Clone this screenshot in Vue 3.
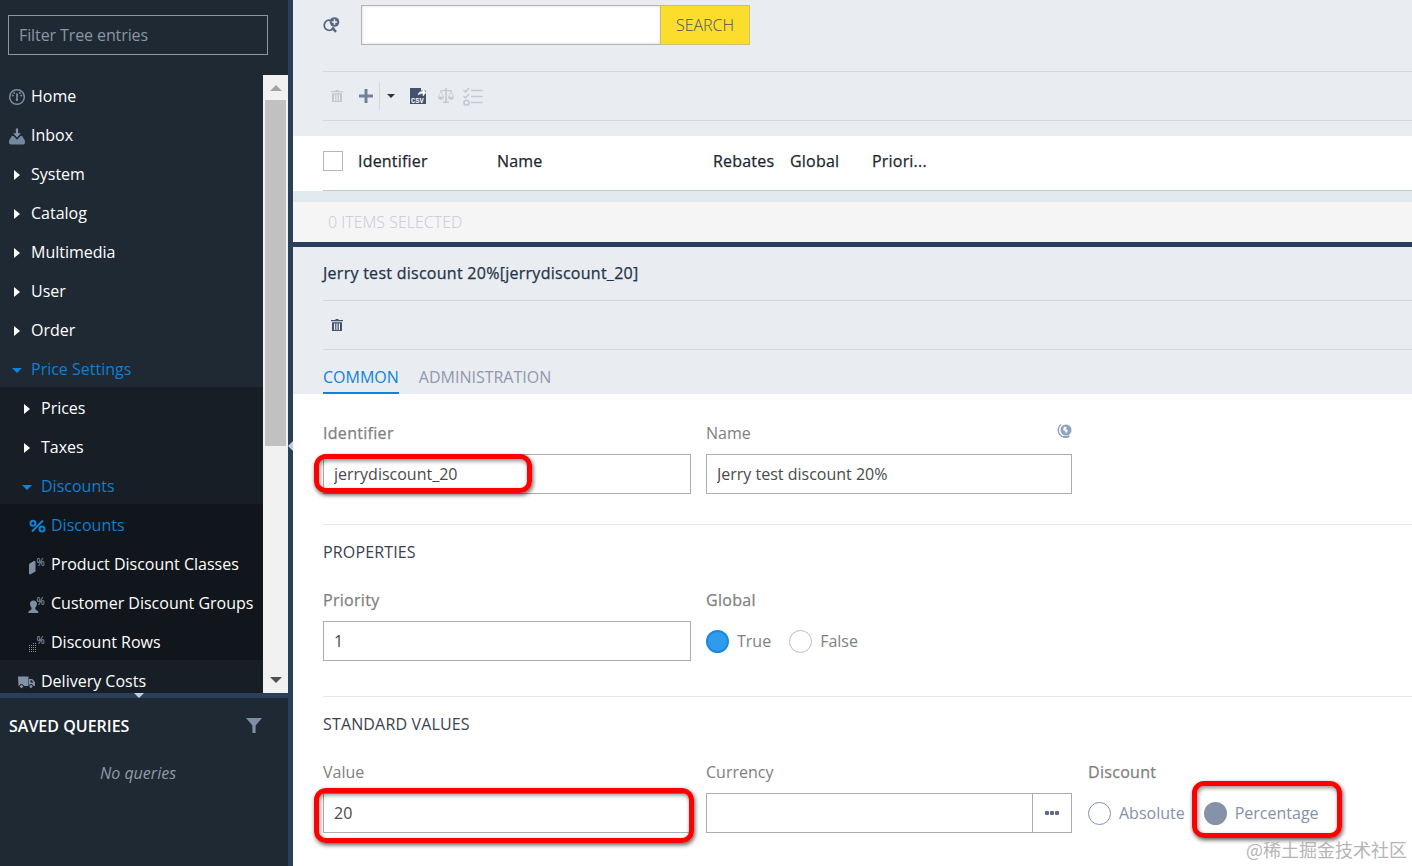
<script setup>
const tree = [
  { label: 'Home', icon: 'home', level: 0 },
  { label: 'Inbox', icon: 'inbox', level: 0 },
  { label: 'System', arrow: 'right', level: 0 },
  { label: 'Catalog', arrow: 'right', level: 0 },
  { label: 'Multimedia', arrow: 'right', level: 0 },
  { label: 'User', arrow: 'right', level: 0 },
  { label: 'Order', arrow: 'right', level: 0 },
  { label: 'Price Settings', arrow: 'down', level: 0, active: true },
  { label: 'Prices', arrow: 'right', level: 1 },
  { label: 'Taxes', arrow: 'right', level: 1 },
  { label: 'Discounts', arrow: 'down', level: 1, active: true },
  { label: 'Discounts', icon: 'percent', level: 2, active: true },
  { label: 'Product Discount Classes', icon: 'product', level: 2 },
  { label: 'Customer Discount Groups', icon: 'customer', level: 2 },
  { label: 'Discount Rows', icon: 'rows', level: 2 },
  { label: 'Delivery Costs', icon: 'truck', level: 1 }
]
const columns = ['Identifier', 'Name', 'Rebates', 'Global', 'Priori...']
</script>

<template>
  <div class="page">
    <aside class="sidebar">
      <div class="sidebar-main">
        <div class="filter-wrap">
          <input class="filter" placeholder="Filter Tree entries" />
        </div>
        <div class="tree-area">
          <nav class="tree">
            <div
              v-for="(item, i) in tree"
              :key="i"
              class="row"
              :class="['lvl' + item.level, { active: item.active }]"
            >
              <span class="slot">
                <span v-if="item.arrow === 'right'" class="arrow-right"></span>
                <span v-else-if="item.arrow === 'down'" class="arrow-down"></span>
                <svg v-else-if="item.icon === 'home'" width="18" height="18" viewBox="0 0 18 18">
                  <circle cx="9" cy="9" r="7.300" fill="none" stroke="#7f8fa3" stroke-width="1.500" />
                  <path d="M8 5.500h2l-.3 5a1.300 1.300 0 1 1-1.400 0z" fill="#7f8fa3" />
                  <circle cx="4.800" cy="7.500" r="1" fill="#7f8fa3" /><circle cx="13.200" cy="7.500" r="1" fill="#7f8fa3" />
                  <circle cx="6.200" cy="5" r=".9" fill="#7f8fa3" /><circle cx="11.800" cy="5" r=".9" fill="#7f8fa3" />
                </svg>
                <svg v-else-if="item.icon === 'inbox'" class="shift1" width="16" height="17" viewBox="0 0 17 17">
                  <path d="M7.300 0h2.400v5h2.800l-4 4.500-4-4.500h2.800z" fill="#8496ad" />
                  <path d="M0 13l3-5h1.800l3.700 4 3.700-4H14l3 5v2a2 2 0 0 1-2 2H2a2 2 0 0 1-2-2z" fill="#74879e" />
                </svg>
                <svg v-else-if="item.icon === 'percent'" class="shift1" width="17" height="14" viewBox="0 0 17 14">
                  <circle cx="4" cy="4.200" r="2.500" fill="none" stroke="#0f83dc" stroke-width="2" />
                  <circle cx="13" cy="10" r="2.500" fill="none" stroke="#0f83dc" stroke-width="2" />
                  <path d="M14 1.500 3 12.500" stroke="#0f83dc" stroke-width="2" />
                </svg>
                <svg v-else-if="item.icon === 'product'" width="18" height="21" viewBox="0 -3 18 21">
                  <path d="M1 6.500l6.500-3v10l-5.500 3L1 16z" fill="#7f8fa3" />
                  <path d="M1.500 5.700 6 3l1.500 .5-6 2.900z" fill="#a4b0c0" />
                  <text x="8.500" y="8" class="tiny">%</text>
                </svg>
                <svg v-else-if="item.icon === 'customer'" width="18" height="21" viewBox="0 -3 18 21">
                  <path d="M5.500 3.500c2.300 0 3.600 1.600 3.400 3.800-.2 1.600-1 2.800-1.600 3.400v1.500l3 2.400v1.400H.5v-1.400l3-2.400v-1.500C2.900 10 2.100 8.900 2 7.300c-.2-2.200 1.200-3.800 3.500-3.800z" fill="#7f8fa3" />
                  <text x="8.500" y="8" class="tiny">%</text>
                </svg>
                <svg v-else-if="item.icon === 'rows'" width="18" height="21" viewBox="0 -3 18 21">
                  <path d="M1 9.500h7M1 11.500h7M1 13.500h7M1 15.500h7" stroke="#7f8fa3" stroke-width="1" stroke-dasharray="1 1" />
                  <path d="M5 7.500h3" stroke="#7f8fa3" stroke-width="1" stroke-dasharray="1 1" />
                  <text x="8.500" y="8" class="tiny">%</text>
                </svg>
                <svg v-else-if="item.icon === 'truck'" width="17" height="14" viewBox="0 0 17 14">
                  <path d="M0 1.500h10.500V11h-10z" fill="#8291a5" />
                  <path d="M11 4h3.200L17 7v4h-6zM12.500 5.300v2.200h2.900l-1.800-2.200z" fill="#8291a5" fill-rule="evenodd" />
                  <circle cx="3.500" cy="11.500" r="2" fill="#8291a5" stroke="#171e25" />
                  <circle cx="13" cy="11.500" r="2" fill="#8291a5" stroke="#171e25" />
                </svg>
              </span>
              <span class="row-label">{{ item.label }}</span>
            </div>
          </nav>
          <div class="scrollbar">
            <span class="sb-up"></span>
            <span class="sb-thumb"></span>
            <span class="sb-down"></span>
          </div>
        </div>
      </div>
      <div class="hsplit"><span class="hsplit-tri"></span></div>
      <div class="saved">
        <div class="saved-head">
          <span>SAVED QUERIES</span>
          <svg width="16" height="16" viewBox="0 0 16 16"><path d="M0 0h16L9.600 7.500V15H6.400V7.500z" fill="#7f8fa3" /></svg>
        </div>
        <div class="no-queries">No queries</div>
      </div>
    </aside>

    <div class="vsplit"><span class="vsplit-tri"></span></div>

    <main class="main">
      <section class="search-row">
        <svg class="search-icon" width="17" height="17" viewBox="0 0 17 17">
          <path d="M7.500 3.300A5.100 5.100 0 1 0 11 10.500" fill="none" stroke="#56667f" stroke-width="1.800" />
          <path d="M9 10.700l4 4.200" stroke="#56667f" stroke-width="2.400" />
          <circle cx="11.500" cy="5" r="4.800" fill="#56667f" />
          <path d="M11.500 2.300v5.400M8.800 5h5.400" stroke="#e9ecf1" stroke-width="1.500" />
        </svg>
        <div class="search-box">
          <input class="search-input" />
          <button class="search-btn">SEARCH</button>
        </div>
      </section>

      <section class="toolbar">
        <svg class="ic-trash" width="12" height="12" viewBox="0 0 12 12" fill="#c3c9d3">
          <path d="M4.500 0h3v1H12v1.200H0V1h4.500zM1 3.200h10V12H1zM3 4.500V11h1.200V4.500zM5.400 4.500V11h1.200V4.500zM7.800 4.500V11H9V4.500z" fill-rule="evenodd" />
        </svg>
        <svg class="ic-plus" width="14" height="14" viewBox="0 0 14 14"><path d="M5.500 0h3v5.500H14v3H8.500V14h-3V8.500H0v-3h5.500z" fill="#6f829b" /></svg>
        <span class="tb-sep"></span>
        <span class="tb-caret"></span>
        <svg class="ic-csv" width="16" height="16" viewBox="0 0 16 16">
          <path d="M0 0h11v2.500H16V16H0z" fill="#45526c" />
          <path d="M8 7c.5-2.700 2.500-3.800 5-3.800V1l3 3.500-3 3.500V5.500C11 5.500 9.500 5.800 8 7z" fill="#fff" stroke="#e9ecf1" stroke-width=".6" />
          <text x="1" y="14.500" class="csv">CSV</text>
        </svg>
        <svg class="ic-scale" width="16" height="16" viewBox="0 0 16 16" fill="#c3c9d3">
          <path d="M7.200 0h1.600v1.800L14 2.600v1L8.800 3v10.500H11V15H5v-1.500h2.200V3L2 3.600v-1l5.200-.8z" />
          <path d="M3 3.200 5.600 9H.4zM13 3.200 15.600 9h-5.200z" fill="none" stroke="#c3c9d3" stroke-width=".7" />
          <path d="M.2 9h5.600a2.800 2.800 0 0 1-5.600 0zM10.200 9h5.600a2.800 2.800 0 0 1-5.600 0z" />
        </svg>
        <svg class="ic-check" width="20" height="19" viewBox="0 0 20 19" fill="none" stroke="#c3c9d3">
          <path d="M.5 3l2 2 3.500-4M.5 9l2 2 3.500-4" stroke-width="1.500" />
          <rect x="1" y="13.500" width="5" height="4.500" rx="2" stroke-width="1.700" />
          <path d="M8 3.500h11.500M8 9.500h11.500M8 15.500h11.500" stroke-width="1.600" />
        </svg>
      </section>

      <section class="table-head">
        <div class="table-head-inner">
          <span class="checkbox"></span>
          <span v-for="c in columns" :key="c" class="th">{{ c }}</span>
        </div>
      </section>
      <div class="table-gap"></div>
      <section class="selected">0 ITEMS SELECTED</section>
      <div class="hbar"></div>

      <section class="detail-head">
        <div class="detail-title">Jerry test discount 20%[jerrydiscount_20]</div>
        <div class="detail-tools">
          <svg width="12" height="12" viewBox="0 0 12 12" fill="#45526c">
            <path d="M4.500 0h3v1H12v1.200H0V1h4.500zM1 3.200h10V12H1zM3 4.500V11h1.200V4.500zM5.400 4.500V11h1.200V4.500zM7.800 4.500V11H9V4.500z" fill-rule="evenodd" />
          </svg>
        </div>
        <div class="tabs">
          <span class="tab tab-on">COMMON</span>
          <span class="tab">ADMINISTRATION</span>
        </div>
      </section>

      <section class="form">
        <div class="group first">
          <div class="grid">
            <div class="field">
              <label class="strong">Identifier</label>
              <input class="inp" value="jerrydiscount_20" />
            </div>
            <div class="field">
              <label>Name
                <svg class="globe" width="16" height="16" viewBox="0 0 16 16">
                  <path d="M4 1.500a7 7 0 0 0 8.500 11.200" fill="none" stroke="#8ea3bb" stroke-width="1.500" />
                  <circle cx="9" cy="7" r="5.500" fill="#8ea3bb" />
                  <path d="M7 3.500l3 .5-1 2 2 1.500-2 3-1-2.500-2-1z" fill="#f4f6f8" />
                  <path d="M6 13.800h6" stroke="#8ea3bb" stroke-width="1.500" />
                </svg>
              </label>
              <input class="inp" value="Jerry test discount 20%" />
            </div>
          </div>
        </div>

        <div class="group">
          <h3 class="group-title">PROPERTIES</h3>
          <div class="grid">
            <div class="field">
              <label class="strong">Priority</label>
              <input class="inp" value="1" />
            </div>
            <div class="field">
              <label class="strong">Global</label>
              <div class="radios">
                <span class="radio radio-on"></span><span class="radio-label">True</span>
                <span class="radio radio-off"></span><span class="radio-label">False</span>
              </div>
            </div>
          </div>
        </div>

        <div class="group last">
          <h3 class="group-title">STANDARD VALUES</h3>
          <div class="grid">
            <div class="field">
              <label>Value</label>
              <input class="inp" value="20" />
            </div>
            <div class="field">
              <label>Currency</label>
              <div class="currency">
                <input class="inp cur-inp" />
                <span class="cur-btn"><i></i><i></i><i></i></span>
              </div>
            </div>
            <div class="field">
              <label class="strong">Discount</label>
              <div class="radios blue">
                <span class="radio radio-abs"></span><span class="radio-label">Absolute</span>
                <span class="radio radio-pct"></span><span class="radio-label">Percentage</span>
              </div>
            </div>
          </div>
        </div>
      </section>
    </main>

    <div class="mark mark-a"></div>
    <div class="mark mark-b"></div>
    <div class="mark mark-c"></div>
    <div class="watermark">@稀土掘金技术社区</div>
  </div>
</template>

<style>
html, body { margin: 0; padding: 0; }
</style>

<style scoped>
* { box-sizing: border-box; }
.page {
  position: relative;
  display: flex;
  width: 1412px;
  height: 866px;
  overflow: hidden;
  font-family: "Open Sans", "Noto Sans", sans-serif;
  font-size: 16px;
  background: #fff;
}
input { font-family: inherit; font-size: 16px; outline: none; }

/* sidebar */
.sidebar {
  width: 288px;
  display: flex;
  flex-direction: column;
  background: #1f2933;
  flex: none;
}
.sidebar-main { height: 693px; display: flex; flex-direction: column; }
.filter-wrap { padding: 15px 20px 20px 8px; height: 75px; }
.filter {
  width: 260px;
  height: 40px;
  background: transparent;
  border: 1px solid #8a96a3;
  padding: 0 10px;
  color: #fff;
  letter-spacing: -0.1px;
}
.filter::placeholder { color: #8a96a3; opacity: 1; }
.tree-area { flex: 1; display: flex; min-height: 0; }
.tree { flex: 1; overflow: hidden; }
.row {
  height: 39px;
  display: flex;
  align-items: center;
  color: #fff;
  padding-top: 3px;
  white-space: nowrap;
}
.row.active { color: #0f7fd2; }
.lvl0 { padding-left: 8px; }
.lvl1 { padding-left: 18px; background: #171e25; }
.lvl2 { padding-left: 28px; background: #10161b; }
.slot {
  width: 23px;
  height: 18px;
  flex: none;
  display: flex;
  align-items: center;
  position: relative;
  top: 1px;
}
.shift1 { margin-left: 1px; }
.arrow-right {
  margin-left: 6px;
  width: 0; height: 0;
  border-left: 6px solid #fff;
  border-top: 5px solid transparent;
  border-bottom: 5px solid transparent;
}
.arrow-down {
  margin-left: 4px;
  width: 0; height: 0;
  border-top: 5px solid #0f83dc;
  border-left: 5px solid transparent;
  border-right: 5px solid transparent;
}
.tiny { font-size: 10px; fill: #9fadc0; font-family: "Open Sans", sans-serif; }
.csv { font-size: 7px; fill: #fff; font-family: "Liberation Mono", monospace; font-weight: 700; }

.scrollbar {
  width: 25px;
  flex: none;
  background: #f1f1f1;
  display: flex;
  flex-direction: column;
  align-items: center;
  position: relative;
}
.sb-up {
  margin-top: 10px;
  width: 0; height: 0;
  border-bottom: 6px solid #a3a3a3;
  border-left: 6px solid transparent;
  border-right: 6px solid transparent;
}
.sb-thumb { margin-top: 9px; width: 21px; height: 346px; background: #c1c1c1; }
.sb-down {
  margin-top: auto;
  margin-bottom: 10px;
  width: 0; height: 0;
  border-top: 6px solid #505050;
  border-left: 6px solid transparent;
  border-right: 6px solid transparent;
}
.hsplit {
  height: 5px;
  background: #2a3f5a;
  display: flex;
  justify-content: center;
  flex: none;
}
.hsplit-tri {
  width: 0; height: 0;
  margin-right: 10px;
  border-top: 5px solid #c5cfdb;
  border-left: 5px solid transparent;
  border-right: 5px solid transparent;
}
.saved { flex: 1; }
.saved-head {
  height: 56px;
  padding: 0 26px 0 9px;
  display: flex;
  align-items: center;
  justify-content: space-between;
  color: #fff;
  font-weight: 600;
}
.no-queries {
  width: 276px;
  text-align: center;
  color: #8f9aa6;
  font-style: italic;
  padding-top: 6px;
  line-height: 26px;
}

.vsplit {
  width: 5px;
  flex: none;
  background: #2a3f5a;
  position: relative;
}
.vsplit-tri {
  position: absolute;
  left: 0;
  top: 441px;
  width: 0; height: 0;
  border-right: 5px solid #c5cfdb;
  border-top: 5px solid transparent;
  border-bottom: 5px solid transparent;
}

/* main */
.main { flex: 1; min-width: 0; display: flex; flex-direction: column; background: #e9ecf1; }
.search-row {
  height: 71px;
  padding: 5px 0 0 30px;
  display: flex;
  align-items: flex-start;
}
.search-icon { margin-top: 12px; }
.search-box { display: flex; margin-left: 21px; height: 40px; width: 389px; }
.search-input {
  flex: 1;
  min-width: 0;
  height: 40px;
  background: #fff;
  border: 1px solid #b3b3b3;
  border-right: 0;
  box-shadow: inset 0 0 3px #d5d5d5;
}
.search-btn {
  width: 90px;
  height: 40px;
  background: #fcdd2b;
  border: 1px solid #c8c07a;
  color: #45526c;
  font-family: inherit;
  font-size: 16px;
  font-weight: 300;
  padding: 0;
}
.toolbar {
  height: 50px;
  margin-left: 30px;
  border-top: 1px solid #d4d8de;
  border-bottom: 1px solid #d4d8de;
  display: flex;
  align-items: center;
  position: relative;
}
.ic-trash { margin-left: 8px; }
.ic-plus { margin-left: 16px; }
.tb-sep { width: 1px; height: 28px; background: #d4d8de; margin-left: 6px; }
.tb-caret {
  margin-left: 7px;
  width: 0; height: 0;
  border-top: 4px solid #333;
  border-left: 4px solid transparent;
  border-right: 4px solid transparent;
}
.ic-csv { margin-left: 15px; }
.ic-scale { margin-left: 12px; }
.ic-check { margin-left: 9px; }

.table-head { margin-top: 15px; height: 55px; background: #fff; padding-left: 30px; }
.table-head-inner {
  height: 55px;
  border-bottom: 1px solid #c1c9d3;
  padding-bottom: 4px;
  display: grid;
  grid-template-columns: 35px 139px 216px 77px 82px 1fr;
  align-items: center;
  color: #1c2530;
}
.checkbox { width: 20px; height: 20px; border: 1px solid #b7b7b7; background: #fff; }
.th {
  white-space: nowrap;
  letter-spacing: 0.2px;
  -webkit-text-stroke: 0.25px #1c2530;
}
.table-gap { height: 11px; background: #e2eaf0; }
.selected {
  height: 40px;
  background: #f5f5f5;
  color: #c4cad6;
  padding-left: 35px;
  line-height: 41px;
  font-weight: 300;
}
.hbar { height: 5px; background: #2a3f5a; flex: none; }

.detail-head { height: 147px; padding-left: 30px; }
.detail-title {
  height: 54px;
  border-bottom: 1px solid #d4d8de;
  line-height: 52px;
  color: #1f3349;
  letter-spacing: 0.27px;
  -webkit-text-stroke: 0.25px #1f3349;
}
.detail-tools {
  height: 49px;
  border-bottom: 1px solid #d4d8de;
  display: flex;
  align-items: center;
  padding-left: 8px;
}
.tabs { height: 44px; display: flex; gap: 20px; }
.tab {
  height: 44px;
  line-height: 54px;
  color: #8f99ac;
}
.tab-on { color: #0f83dc; border-bottom: 2px solid #0f83dc; }

.form { flex: 1; background: #fff; padding-left: 30px; }
.group { border-bottom: 1px solid #e4e6ea; padding-bottom: 35px; }
.group.first { padding-top: 24px; padding-bottom: 30px; }
.group.last { border-bottom: 0; padding-bottom: 0; }
.group-title {
  margin: 0;
  height: 55px;
  line-height: 55px;
  font-size: 16px;
  font-weight: 400;
  color: #39424e;
  letter-spacing: 0.15px;
}
.grid { display: grid; grid-template-columns: 368px 366px 300px; column-gap: 15px; padding-top: 5px; }
.group.first .grid { padding-top: 0; }
.grid > .field:nth-child(3) { margin-left: 1px; }
.field label {
  display: block;
  position: relative;
  height: 30px;
  margin-bottom: 6px;
  line-height: 30px;
  color: #808080;
}
.field label.strong { letter-spacing: 0.3px; -webkit-text-stroke: 0.25px #808080; }
.globe { position: absolute; right: -1px; top: 5px; }
.inp {
  display: block;
  width: 100%;
  height: 40px;
  border: 1px solid #adadad;
  background: #fff;
  padding: 0 10px;
  color: #4a4a4a;
}
.currency { display: flex; }
.cur-inp { flex: 1; min-width: 0; border-right: 0; }
.cur-btn {
  width: 40px;
  height: 40px;
  flex: none;
  border: 1px solid #adadad;
  display: flex;
  align-items: center;
  justify-content: center;
  gap: 1px;
}
.cur-btn i { width: 4px; height: 4px; border-radius: 1px; background: #5c6a83; }
.radios { display: flex; align-items: center; height: 40px; color: #808080; }
.radios.blue { color: #8591a8; }
.radio { width: 23px; height: 23px; border-radius: 50%; flex: none; background: #fff; }
.radio-label { margin-left: 8px; margin-right: 18px; }
.radios.blue .radio-label { margin-right: 19px; }
.radio-on { background: #2f9bec; border: 2px solid #1d88dc; }
.radio-off { border: 1px solid #bdbdbd; }
.radio-abs { border: 1px solid #8290a8; }
.radio-pct { background: #8592a8; }

/* annotations */
.mark {
  position: absolute;
  border: 5px solid #f00;
  border-radius: 12px;
  box-shadow: 1px 2px 4px rgba(0, 0, 0, .65), inset 1px 2px 4px rgba(0, 0, 0, .45);
}
.mark-a { left: 314px; top: 454px; width: 218px; height: 39px; }
.mark-b { left: 314px; top: 788px; width: 380px; height: 55px; }
.mark-c { left: 1192px; top: 781px; width: 150px; height: 57px; }
.watermark {
  position: absolute;
  left: 1246px;
  top: 836px;
  font-family: "Noto Sans CJK SC", sans-serif;
  font-size: 18px;
  line-height: 26px;
  color: #b5b5b5;
  white-space: nowrap;
}
</style>
